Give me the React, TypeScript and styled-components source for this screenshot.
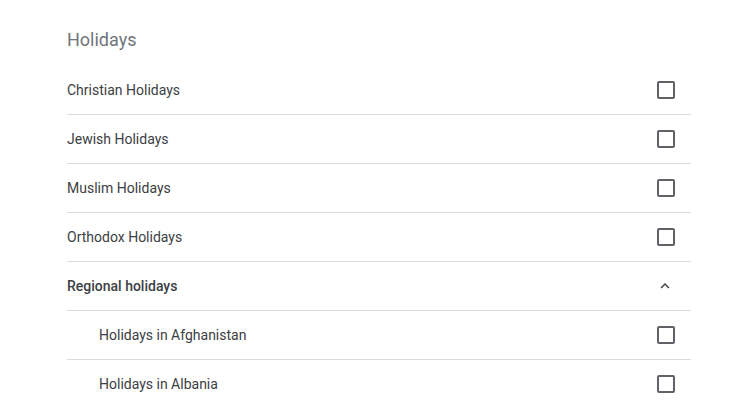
import styled, { createGlobalStyle } from 'styled-components';

const GlobalStyle = createGlobalStyle`
  body {
    margin: 0;
    background: #fff;
    font-family: Roboto, 'Liberation Sans', Arial, sans-serif;
  }
`;

const holidays = ['Christian Holidays', 'Jewish Holidays', 'Muslim Holidays', 'Orthodox Holidays'];
const regions = ['Holidays in Afghanistan', 'Holidays in Albania'];

const App = () => {
  return (
    <>
      <GlobalStyle />
      <Page>
        <Title>Holidays</Title>
        <List>
          {holidays.map(name => (
            <Row key={name}>
              <Label>{name}</Label>
              <Checkbox />
            </Row>
          ))}
          <Row>
            <Label $bold>Regional holidays</Label>
            <ChevronBox>
              <svg width='18' height='18' viewBox='0 0 24 24'>
                <path d='M7.41 15.41L12 10.83l4.59 4.58L18 14l-6-6-6 6z' fill='#3c4043' />
              </svg>
            </ChevronBox>
          </Row>
          {regions.map(name => (
            <Row key={name} $nested>
              <Label>{name}</Label>
              <Checkbox />
            </Row>
          ))}
        </List>
      </Page>
    </>
  );
};

export default App;

const Page = styled.div`
  padding: 28px 0 0 67px;
  width: 624px;
`;

const Title = styled.h2`
  margin: 0 0 14px;
  font-size: 18px;
  font-weight: 400;
  line-height: 24px;
  color: #70757a;
`;

const List = styled.div`
  display: flex;
  flex-direction: column;
`;

const Row = styled.div<{ $nested?: boolean }>`
  display: flex;
  align-items: center;
  justify-content: space-between;
  height: 48px;
  padding: 0 16px 0 ${p => (p.$nested ? '32px' : '0')};
  border-bottom: 1px solid #dadce0;
`;

const Label = styled.span<{ $bold?: boolean }>`
  font-size: 14px;
  font-weight: ${p => (p.$bold ? 500 : 400)};
  color: #3c4043;
`;

const Checkbox = styled.span`
  box-sizing: border-box;
  width: 18px;
  height: 18px;
  border: 2px solid #5f6368;
  border-radius: 2px;
`;

const ChevronBox = styled.span`
  display: flex;
  margin-right: 1px;
`;
